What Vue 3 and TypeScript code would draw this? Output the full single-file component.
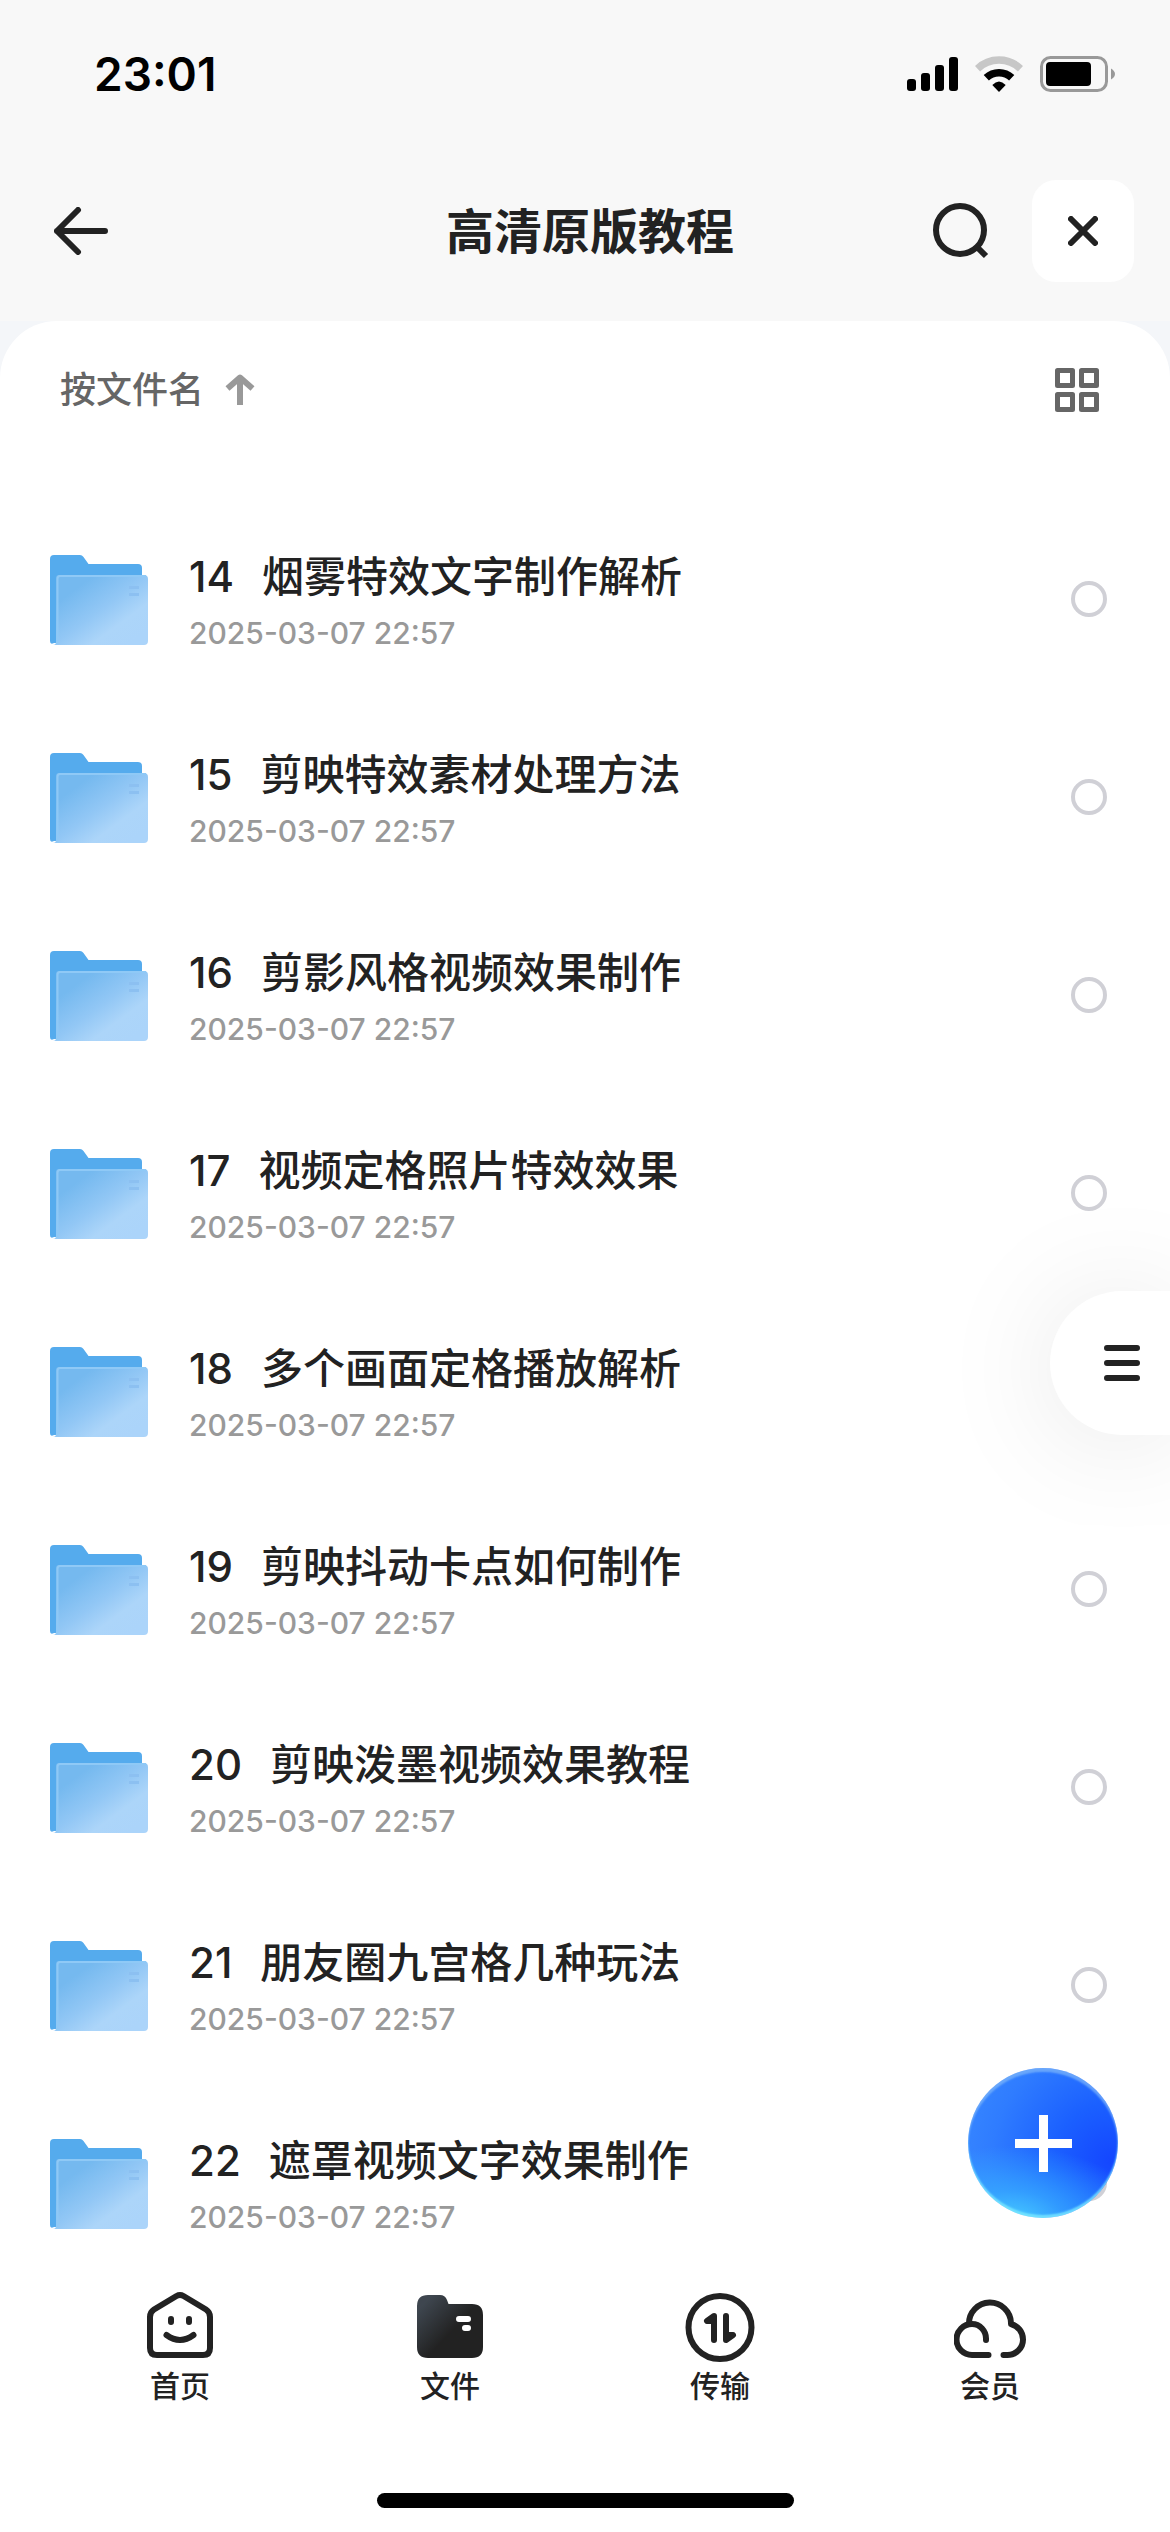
<script setup lang="ts">
import { ref } from 'vue'

interface Folder {
  no: string
  name: string
  time: string
}

const names: string[] = [
  '烟雾特效文字制作解析',
  '剪映特效素材处理方法',
  '剪影风格视频效果制作',
  '视频定格照片特效效果',
  '多个画面定格播放解析',
  '剪映抖动卡点如何制作',
  '剪映泼墨视频效果教程',
  '朋友圈九宫格几种玩法',
  '遮罩视频文字效果制作',
]

const folders: Folder[] = names.map((name, i) => ({
  no: String(14 + i),
  name,
  time: '2025-03-07 22:57',
}))

const selected = ref<string[]>([])
</script>

<template>
  <div class="page">
    <div class="status">
      <span class="clock">23:01</span>
      <div class="indicators">
        <svg width="51" height="36" viewBox="0 0 51 36" aria-hidden="true">
          <rect x="0" y="23" width="9" height="12" rx="3" />
          <rect x="14" y="17" width="9" height="18" rx="3" />
          <rect x="28" y="9" width="9" height="26" rx="3" />
          <rect x="42" y="1" width="9" height="34" rx="3" />
        </svg>
        <svg width="48" height="36" viewBox="0 0 48 36" fill="none" aria-hidden="true">
          <path d="M2.5 12.7A31 31 0 0 1 45.5 12.7" stroke="#c7c7c7" stroke-width="7.5" />
          <path d="M11.3 21.8A18.3 18.3 0 0 1 36.7 21.8" stroke="#000" stroke-width="7.5" />
          <path d="M24 36L17.3 29Q24 22 30.7 29Z" fill="#000" />
        </svg>
        <svg width="76" height="36" viewBox="0 0 76 36" aria-hidden="true">
          <rect x="1.5" y="1.5" width="65" height="33" rx="9" fill="none" stroke="#999" stroke-width="3" />
          <rect x="6" y="6" width="45" height="24" rx="4" />
          <path d="M71 12.5Q75 15 75 18Q75 21 71 23.5Z" fill="#999" />
        </svg>
      </div>
    </div>

    <header class="header">
      <button class="icon-btn back" aria-label="返回">
        <svg width="54" height="48" viewBox="0 0 54 48">
          <path d="M24 3L3 24L24 45M3 24H51" />
        </svg>
      </button>
      <h1>高清原版教程</h1>
      <div class="actions">
        <button class="icon-btn" aria-label="搜索">
          <svg width="58" height="58" viewBox="0 0 58 58">
            <circle cx="28" cy="28" r="24" />
            <path d="M45 45L54 54" stroke-linecap="butt" />
          </svg>
        </button>
        <button class="icon-btn close" aria-label="关闭">
          <svg width="30" height="30" viewBox="0 0 30 30">
            <path d="M3 3L27 27M27 3L3 27" />
          </svg>
        </button>
      </div>
    </header>

    <div class="backdrop">
      <main class="sheet">
        <div class="toolbar">
          <button class="sort">
            按文件名
            <svg width="30" height="32" viewBox="0 0 30 32" aria-hidden="true">
              <path d="M15 31V4M2.5 14.5L15 3.5L27.5 14.5" fill="none" stroke="#999" stroke-width="6" stroke-linejoin="round" />
            </svg>
          </button>
          <button class="icon-btn" aria-label="网格视图">
            <svg class="grid-icon" width="44" height="44" viewBox="0 0 44 44">
              <rect x="2.5" y="2.5" width="15" height="15" />
              <rect x="26.5" y="2.5" width="15" height="15" />
              <rect x="2.5" y="26.5" width="15" height="15" />
              <rect x="26.5" y="26.5" width="15" height="15" />
            </svg>
          </button>
        </div>

        <ul class="list">
          <li v-for="f in folders" :key="f.no" class="row">
            <svg class="folder" width="98" height="90" viewBox="0 0 98 90" aria-hidden="true">
              <defs>
                <linearGradient :id="'front' + f.no" x1="0.1" y1="0.1" x2="0.9" y2="0.9">
                  <stop offset="0.15" stop-color="#75b9ef" />
                  <stop offset="0.5" stop-color="#92c7f5" />
                  <stop offset="0.75" stop-color="#acd5f9" />
                  <stop offset="1" stop-color="#abd4fa" />
                </linearGradient>
              </defs>
              <path d="M0 4Q0 0 4 0H30Q32 0 33.500 2L38.500 9H88Q92 9 92 13V88H4Q0 90 0 86Z" fill="#55abed" />
              <path d="M6 23Q6 20 9 20H94Q98 20 98 24V86Q98 90 94 90H3Q6 90 6 87Z" :fill="`url(#front${f.no})`" />
              <path d="M7.500 89V24Q7.500 21 10 21H96" fill="none" stroke="#8fc9f6" stroke-width="2" />
              <path d="M79 32.500H89M79 39.500H89" stroke="#8cc0f1" stroke-width="3" />
            </svg>
            <label class="info" :for="'pick' + f.no">
              <span class="name"><span class="no">{{ f.no }}</span><span>{{ f.name }}</span></span>
              <span class="time">{{ f.time }}</span>
            </label>
            <input :id="'pick' + f.no" v-model="selected" class="pick" type="checkbox" :value="f.no" />
          </li>
        </ul>
      </main>
    </div>

    <footer class="footer">
      <nav class="tabs">
        <a class="tab" href="#home">
          <svg width="72" height="72" viewBox="0 0 72 72" aria-hidden="true">
            <path d="M32.500 6Q36 4 39.500 6L62 19.500Q66 22 66 27V58Q66 65 59 65H13Q6 65 6 58V27Q6 22 10 19.500Z" />
            <path d="M27 29V32M45 29V32" />
            <path d="M22.500 45Q36 55 49.500 45" />
          </svg>
          首页
        </a>
        <a class="tab" href="#files">
          <svg width="72" height="72" viewBox="0 0 72 72" aria-hidden="true">
            <defs>
              <linearGradient id="tabFolder" x1="0.05" y1="0.1" x2="0.55" y2="0.55">
                <stop offset="0.1" stop-color="#3e464f" />
                <stop offset="1" stop-color="#222" />
              </linearGradient>
            </defs>
            <path d="M3 16Q3 5 14 5H26Q31 5 33 10L34.500 14H58Q69 14 69 25V57Q69 68 58 68H14Q3 68 3 57Z" fill="url(#tabFolder)" stroke="none" />
            <path d="M45 29H54M51 38H54" stroke="#fff" />
          </svg>
          文件
        </a>
        <a class="tab" href="#transfer">
          <svg width="72" height="72" viewBox="0 0 72 72" aria-hidden="true">
            <circle cx="36" cy="37.500" r="31.500" />
            <path d="M30 50V26L23 31H30M42 26V50L49 45H42" fill="#222" />
          </svg>
          传输
        </a>
        <a class="tab" href="#vip">
          <svg width="72" height="72" viewBox="0 0 72 72" aria-hidden="true">
            <path d="M34.500 65H18A15.500 15.500 0 0 1 18 34A14 14.500 0 0 1 32 49V50" />
            <path d="M15 34A21 21 0 0 1 57 33V34A16 16 0 0 1 69 49.500A15.500 15.500 0 0 1 53.500 65H49.500" />
          </svg>
          会员
        </a>
      </nav>
      <div class="home-bar"></div>
    </footer>

    <button class="side-menu" aria-label="菜单">
      <svg width="36" height="36" viewBox="0 0 36 36">
        <path d="M3 3H33M3 18H33M3 33H33" />
      </svg>
    </button>

    <button class="fab" aria-label="新建">
      <svg width="57" height="57" viewBox="0 0 57 57">
        <path d="M28.500 0V57M0 28.500H57" />
      </svg>
    </button>
  </div>
</template>

<style>
body {
  margin: 0;
  background: #fff;
}
</style>

<style scoped>
.page {
  position: relative;
  display: flex;
  flex-direction: column;
  min-height: 100vh;
  overflow: hidden;
  background: #fff;
  color: #222;
  font-family: Inter, 'Noto Sans CJK SC', sans-serif;
}

button {
  padding: 0;
  border: 0;
  background: none;
  color: inherit;
  font: inherit;
}

svg {
  display: block;
}

.status {
  display: flex;
  align-items: center;
  justify-content: space-between;
  height: 148px;
  padding: 0 54px 0 94px;
  background: #f8f8f8;
  color: #000;
}

.clock {
  font-size: 46px;
  font-weight: 600;
  line-height: 56px;
}

.indicators {
  display: flex;
  gap: 17px;
}

.header {
  display: grid;
  grid-template-columns: 1fr auto 1fr;
  align-items: center;
  height: 166px;
  padding: 0 36px 7px 46px;
  background: #f8f8f8;
}

.header h1 {
  margin: 0;
  padding-top: 2px;
  font-size: 48px;
  font-weight: 700;
  line-height: 60px;
}

.icon-btn svg {
  fill: none;
  stroke: #222;
  stroke-width: 6;
  stroke-linecap: round;
  stroke-linejoin: round;
}

.back {
  justify-self: start;
  padding: 8px;
}

.actions {
  display: flex;
  align-items: center;
  justify-content: flex-end;
  gap: 42px;
}

.close {
  display: grid;
  place-items: center;
  width: 102px;
  height: 102px;
  border-radius: 24px;
  background: #fff;
}

.backdrop {
  background: #f4f6f9;
}

.sheet {
  border-radius: 57px 57px 0 0;
  background: #fff;
}

.toolbar {
  display: flex;
  align-items: center;
  justify-content: space-between;
  height: 138px;
  padding: 0 71px 0 60px;
}

.sort {
  display: flex;
  align-items: center;
  gap: 21px;
  color: #666;
  font-size: 36px;
  font-weight: 500;
  line-height: 48px;
}

.icon-btn .grid-icon {
  stroke: #666;
  stroke-width: 5;
}

.list {
  margin: 0;
  padding: 41px 0 0;
  list-style: none;
}

.row {
  display: flex;
  align-items: center;
  height: 198px;
  padding: 0 63px 0 50px;
}

.folder {
  flex: none;
  margin-top: 2px;
}

.info {
  display: flex;
  flex: 1;
  flex-direction: column;
  gap: 2px;
  padding: 6px 0 0 41px;
}

.name {
  display: flex;
  gap: 28px;
  font-size: 42px;
  font-weight: 500;
  line-height: 60px;
}

.no {
  font-weight: 450;
}

.time {
  color: #999;
  font-size: 30px;
  font-weight: 500;
  line-height: 48px;
}

.pick {
  appearance: none;
  flex: none;
  width: 36px;
  height: 36px;
  margin: 0;
  border: 4px solid #d0d0d6;
  border-radius: 50%;
}

.pick:checked {
  border-color: #1766ff;
  background: #1766ff;
}

.footer {
  display: flex;
  flex: 1;
  flex-direction: column;
  justify-content: space-between;
  padding: 8px 45px 24px;
}

.tabs {
  display: flex;
}

.tab {
  display: flex;
  flex: 1;
  flex-direction: column;
  align-items: center;
  gap: 4px;
  color: #222;
  font-size: 30px;
  font-weight: 500;
  line-height: 40px;
  text-decoration: none;
}

.tab svg {
  fill: none;
  stroke: #222;
  stroke-width: 6;
  stroke-linecap: round;
  stroke-linejoin: round;
}

.home-bar {
  align-self: center;
  width: 417px;
  height: 15px;
  border-radius: 8px;
  background: #000;
}

.side-menu {
  position: absolute;
  top: 1291px;
  right: 0;
  width: 120px;
  height: 144px;
  padding-left: 54px;
  border-radius: 72px 0 0 72px;
  background: #fff;
  box-shadow: 0 6px 120px rgba(0, 0, 0, 0.1);
}

.side-menu svg {
  fill: none;
  stroke: #222;
  stroke-width: 6;
  stroke-linecap: round;
}

.fab {
  position: absolute;
  right: 52px;
  bottom: 314px;
  display: grid;
  place-items: center;
  width: 150px;
  height: 150px;
  border-radius: 50%;
  background:
    radial-gradient(ellipse 90% 50% at 28% 102%, #46ccff 0%, rgba(56, 176, 255, 0.7) 40%, rgba(40, 130, 255, 0) 100%),
    radial-gradient(circle at 96% 62%, #1446ff 0%, #1b60ff 34%, #2f7cff 70%, #3a8aff 100%);
  box-shadow:
    inset 0 4px 2px rgba(130, 185, 250, 0.7),
    inset 0 -3px 2px rgba(125, 235, 255, 0.8);
}

.fab svg {
  stroke: #fff;
  stroke-width: 9;
}
</style>
